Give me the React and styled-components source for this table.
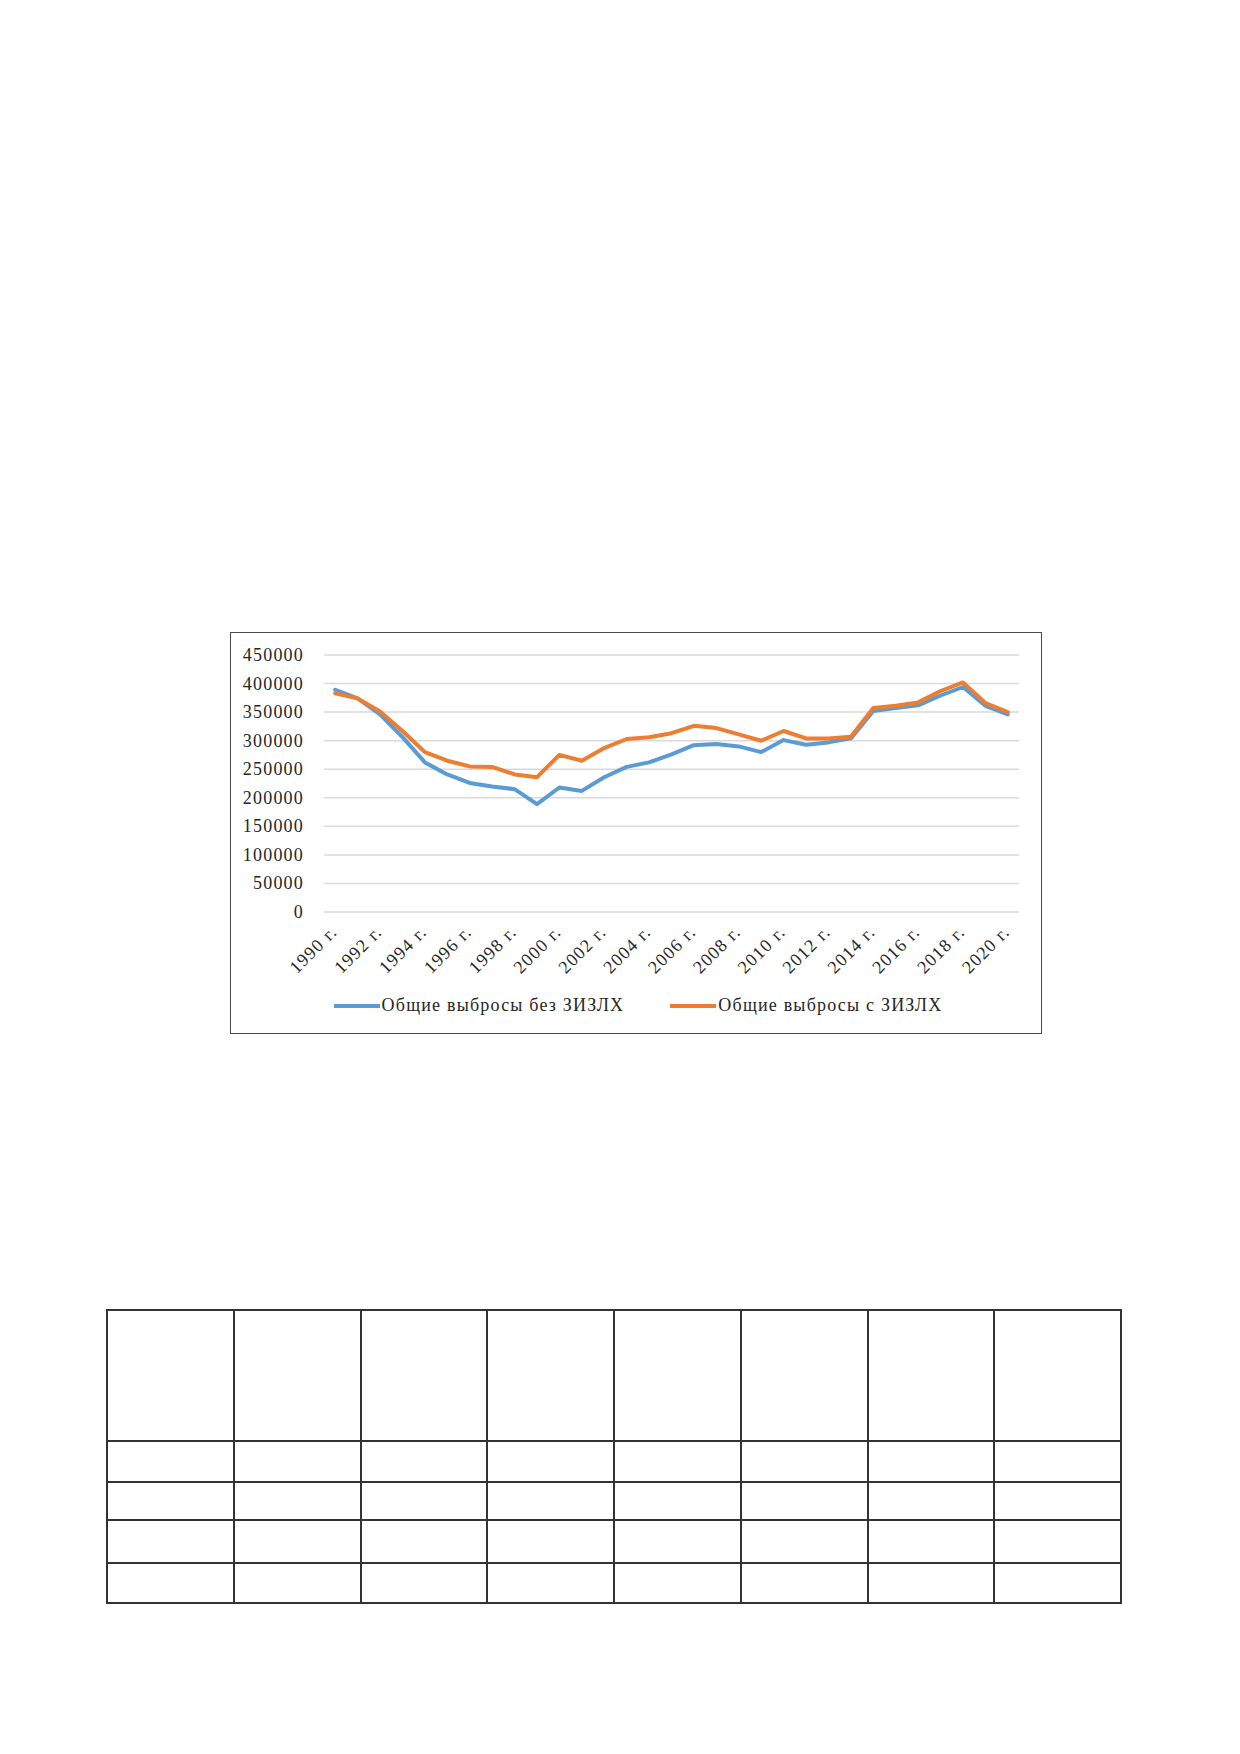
import React from 'react';
import styled, { createGlobalStyle } from 'styled-components';

const GlobalStyle = createGlobalStyle`
  html, body {
    margin: 0;
    padding: 0;
    background: #ffffff;
  }
  body {
    font-family: "Liberation Serif", "Times New Roman", serif;
  }
`;

const Page = styled.div`
  width: 1240px;
  height: 1754px;
  box-sizing: border-box;
  padding-top: 632px;
  display: flex;
  flex-direction: column;
`;

const ChartFrame = styled.div`
  margin-left: 230px;
  width: 812px;
  height: 402px;
  box-sizing: border-box;
  border: 1.5px solid #4a4a4a;
  display: flex;
  flex-direction: column;
`;

const Plot = styled.svg`
  display: block;
  width: 809px;
  height: 352px;
  font-family: "Liberation Serif", "Times New Roman", serif;
`;

const Legend = styled.div`
  display: flex;
  justify-content: center;
  gap: 46px;
  margin-top: 10px;
  padding-left: 4px;
`;

const LegendItem = styled.div`
  display: flex;
  align-items: center;
  font-size: 18px;
  letter-spacing: 1.2px;
  color: #262626;
`;

const Swatch = styled.span`
  width: 46px;
  height: 4px;
  background: ${props => props.color};
  margin-right: 2px;
`;

const GridTable = styled.table`
  margin-top: 275px;
  margin-left: 106px;
  width: 1016px;
  border-collapse: collapse;
  table-layout: fixed;
`;

const Cell = styled.td`
  border: 2px solid #333333;
  height: ${props => props.h}px;
  padding: 0;
  box-sizing: border-box;
`;

const BLUE = '#5b9bd5';
const ORANGE = '#ed7d31';

const blue = [389, 374, 346, 306, 262, 241, 226, 220, 215, 189, 218, 212, 236, 254, 262, 276, 292, 294, 290, 280, 301, 293, 297, 304, 352, 357, 362, 379, 394, 361, 346];
const orange = [383, 374, 351, 317, 280, 265, 255, 254, 241, 236, 275, 265, 287, 303, 306, 313, 326, 322, 311, 300, 317, 304, 304, 307, 357, 361, 367, 387, 402, 366, 350];

const Y0 = 279;
const YTOP = 22;
const X_LEFT = 93;
const X_RIGHT = 788;
const STEP = (X_RIGHT - X_LEFT) / 31;

const px = i => X_LEFT + STEP / 2 + STEP * i;
const py = v => Y0 - (v * 1000 / 450000) * (Y0 - YTOP);

const ticks = [0, 50000, 100000, 150000, 200000, 250000, 300000, 350000, 400000, 450000];
const years = Array.from({ length: 16 }, (_, k) => 1990 + k * 2);
const rowHeights = [131, 41, 38, 43, 40];

const toPoints = data => data.map((v, i) => `${px(i).toFixed(1)},${py(v).toFixed(1)}`).join(' ');

const App = () => {
  return (
    <>
      <GlobalStyle />
      <Page>
        <ChartFrame>
          <Plot viewBox="0 0 809 352">
            {ticks.map(t => {
              const y = py(t / 1000);
              return (
                <g key={t}>
                  <line x1={X_LEFT} x2={X_RIGHT} y1={y} y2={y} stroke="#d9d9d9" strokeWidth="1.5" />
                  <text x="73" y={y + 6} textAnchor="end" fontSize="18" letterSpacing="1.2" fill="#262626">
                    {t}
                  </text>
                </g>
              );
            })}
            <polyline points={toPoints(blue)} fill="none" stroke={BLUE} strokeWidth="4" strokeLinejoin="round" strokeLinecap="round" />
            <polyline points={toPoints(orange)} fill="none" stroke={ORANGE} strokeWidth="4" strokeLinejoin="round" strokeLinecap="round" />
            {years.map((yr, k) => {
              const x = px(k * 2) + 3;
              const y = 300;
              return (
                <text
                  key={yr}
                  x={x}
                  y={y}
                  textAnchor="end"
                  fontSize="18"
                  letterSpacing="1.2"
                  fill="#262626"
                  transform={`rotate(-45 ${x} ${y})`}
                >
                  {yr} г.
                </text>
              );
            })}
          </Plot>
          <Legend>
            <LegendItem>
              <Swatch color={BLUE} />
              Общие выбросы без ЗИЗЛХ
            </LegendItem>
            <LegendItem>
              <Swatch color={ORANGE} />
              Общие выбросы с ЗИЗЛХ
            </LegendItem>
          </Legend>
        </ChartFrame>

        <GridTable>
          <tbody>
            {rowHeights.map((h, r) => (
              <tr key={r}>
                {Array.from({ length: 8 }, (_, c) => (
                  <Cell key={c} h={h} />
                ))}
              </tr>
            ))}
          </tbody>
        </GridTable>
      </Page>
    </>
  );
};

export default App;
